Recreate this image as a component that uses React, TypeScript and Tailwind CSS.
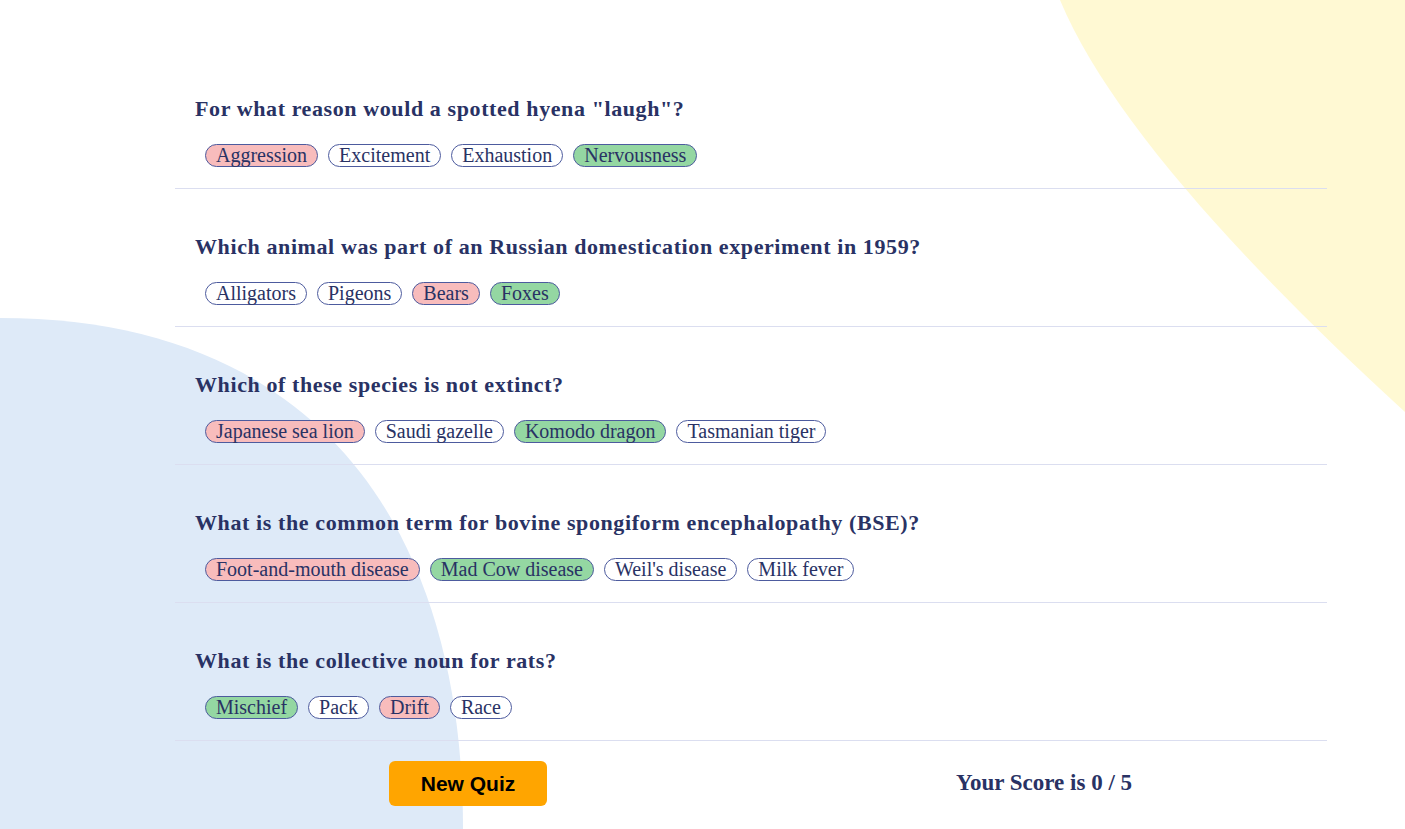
import React from 'react';

type Status = 'wrong' | 'right' | 'none';

type Question = {
  q: string;
  answers: { text: string; status: Status }[];
};

const questions: Question[] = [
  {
    q: 'For what reason would a spotted hyena "laugh"?',
    answers: [
      { text: 'Aggression', status: 'wrong' },
      { text: 'Excitement', status: 'none' },
      { text: 'Exhaustion', status: 'none' },
      { text: 'Nervousness', status: 'right' },
    ],
  },
  {
    q: 'Which animal was part of an Russian domestication experiment in 1959?',
    answers: [
      { text: 'Alligators', status: 'none' },
      { text: 'Pigeons', status: 'none' },
      { text: 'Bears', status: 'wrong' },
      { text: 'Foxes', status: 'right' },
    ],
  },
  {
    q: 'Which of these species is not extinct?',
    answers: [
      { text: 'Japanese sea lion', status: 'wrong' },
      { text: 'Saudi gazelle', status: 'none' },
      { text: 'Komodo dragon', status: 'right' },
      { text: 'Tasmanian tiger', status: 'none' },
    ],
  },
  {
    q: 'What is the common term for bovine spongiform encephalopathy (BSE)?',
    answers: [
      { text: 'Foot-and-mouth disease', status: 'wrong' },
      { text: 'Mad Cow disease', status: 'right' },
      { text: "Weil's disease", status: 'none' },
      { text: 'Milk fever', status: 'none' },
    ],
  },
  {
    q: 'What is the collective noun for rats?',
    answers: [
      { text: 'Mischief', status: 'right' },
      { text: 'Pack', status: 'none' },
      { text: 'Drift', status: 'wrong' },
      { text: 'Race', status: 'none' },
    ],
  },
];

const pillBg: Record<Status, string> = {
  wrong: 'bg-[#F8BCBC]',
  right: 'bg-[#94D7A2]',
  none: 'bg-white',
};

function Pill({ text, status }: { text: string; status: Status }) {
  return (
    <span
      className={`${pillBg[status]} rounded-[12px] border border-[#4D5B9E] px-[10px] text-[20px] leading-[21px] text-[#293264]`}
    >
      {text}
    </span>
  );
}

export default function App() {
  return (
    <div className="relative h-[829px] w-full overflow-hidden bg-white font-['Liberation_Serif',serif]">
      {/* background blobs */}
      <svg className="absolute inset-0 h-full w-full" viewBox="0 0 1405 829" preserveAspectRatio="none">
        <path d="M1060 0 C1110 120 1250 270 1405 412 L1405 0 Z" fill="#FFF9D3" />
        <path d="M0 318 C316 318 463 526 463 829 L0 829 Z" fill="#DEEAF8" />
      </svg>

      <div className="relative ml-[175px] w-[1152px] pt-[51px]">
        {questions.map((item) => (
          <div key={item.q} className="h-[138px] border-b border-[#DBDEF0] pt-[44px]">
            <h2 className="pl-[20px] text-[22px] font-bold leading-[28px] tracking-[0.6px] text-[#293264]">
              {item.q}
            </h2>
            <div className="mt-[21px] flex gap-[10px] pl-[30px]">
              {item.answers.map((a) => (
                <Pill key={a.text} text={a.text} status={a.status} />
              ))}
            </div>
          </div>
        ))}

        <div className="ml-[5px] grid w-[1152px] grid-cols-2 items-center justify-items-center pt-[20px]">
          <button className="h-[45px] w-[158px] rounded-[6px] bg-[#FFA500] font-['Liberation_Sans',sans-serif] text-[21px] font-bold text-black">
            New Quiz
          </button>
          <span className="text-[23px] font-bold text-[#293264]">Your Score is 0 / 5</span>
        </div>
      </div>
    </div>
  );
}
